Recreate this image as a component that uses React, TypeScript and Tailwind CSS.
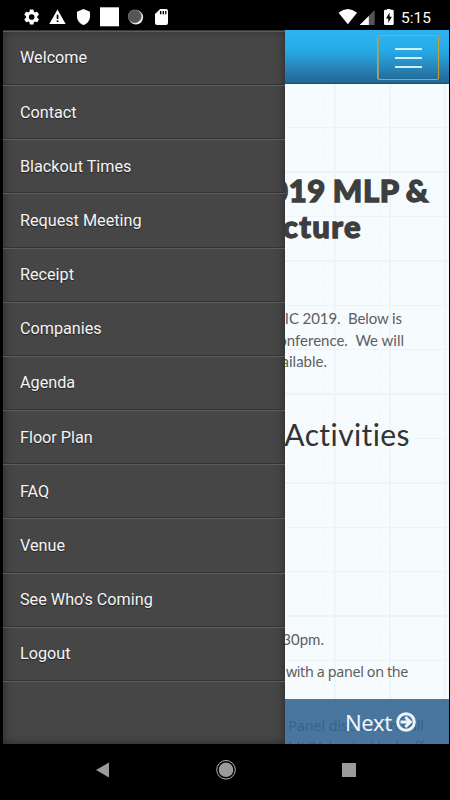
import React from "react";

const items = [
  "Welcome", "Contact", "Blackout Times", "Request Meeting", "Receipt", "Companies",
  "Agenda", "Floor Plan", "FAQ", "Venue", "See Who's Coming", "Logout",
];

function StatusBar() {
  return (
    <div className="relative h-[30px] shrink-0 bg-black">
      <svg className="block" width="450" height="30" viewBox="0 0 450 30" fill="#fff">
        <g transform="translate(22.3 7.6) scale(.78)">
          <path d="M19.14 12.94c.04-.3.06-.61.06-.94 0-.32-.02-.64-.07-.94l2.03-1.58a.49.49 0 0 0 .12-.61l-1.92-3.32a.49.49 0 0 0-.59-.22l-2.39.96c-.5-.38-1.03-.7-1.62-.94l-.36-2.54a.48.48 0 0 0-.48-.41h-3.84c-.24 0-.43.17-.47.41l-.36 2.54c-.59.24-1.13.57-1.62.94l-2.39-.96a.48.48 0 0 0-.59.22L2.74 8.87c-.12.21-.08.47.12.61l2.03 1.58c-.05.3-.09.63-.09.94s.02.64.07.94l-2.03 1.58a.49.49 0 0 0-.12.61l1.92 3.32c.12.22.37.29.59.22l2.39-.96c.5.38 1.03.7 1.62.94l.36 2.54c.05.24.24.41.48.41h3.84c.24 0 .44-.17.47-.41l.36-2.54c.59-.24 1.13-.56 1.62-.94l2.39.96c.22.08.47 0 .59-.22l1.92-3.32a.49.49 0 0 0-.12-.61l-2.01-1.58zM12 15.6A3.6 3.6 0 1 1 12 8.400a3.600 3.600 0 0 1 0 7.200z" />
        </g>
        <path fillRule="evenodd" d="M49.300 24 57.500 9.500 65.700 24zM56.700 14.700v4.300h1.700v-4.300zm0 5.500v1.800h1.700v-1.800z" />
        <path d="M83.500 9l6.500 2.800v4.700c0 3.800-2.700 7.200-6.500 8.500-3.800-1.300-6.500-4.700-6.500-8.500v-4.700z" />
        <path d="M100 7.300h19v19h-19z" />
        <circle cx="135.900" cy="17.300" r="7.200" fill="#eee" />
        <circle cx="134.600" cy="16.200" r="6.800" fill="#555" />
        <circle cx="134.900" cy="16.500" r="6.300" fill="none" stroke="#8a8a8a" strokeWidth="1" strokeDasharray="1 1" />
        <path fillRule="evenodd" d="M160.200 9H166q2 0 2 2v12q0 2-2 2h-9q-2 0-2-2v-9zM160 11v3.300h1.400V11zm2.600 0v3.300h1.400V11zm2.500 0v3.300h1.300V11z" />
        <path d="M338.500 12.700q9.300-7.300 18.600 0L347.800 24.300z" />
        <path d="M374.700 10v15h-15z" fill="#555" />
        <path d="M368.800 15.900V25h-9.100z" />
        <path fillRule="evenodd" d="M387 9.800V9h3.500v.8h2q1.200 0 1.200 1.200v12.700q0 1.200-1.200 1.200h-7.300q-1.200 0-1.200-1.200V11q0-1.200 1.200-1.200zM389.600 12.500l-3.600 6h2.300v4.300l3.600-6h-2.300z" />
      </svg>
      <span className="absolute left-[401px] top-[8px] font-['Roboto',sans-serif] text-[15.500px] leading-[20px] text-white">5:15</span>
    </div>
  );
}

function Drawer() {
  return (
    <nav className="w-[282px] shrink-0 bg-[#464646] pt-px font-['Roboto',sans-serif] text-[16.200px] text-[#f5f5f5] shadow-[inset_0_0_8px_#262626]">
      {items.map((label) => (
        <div key={label} className="flex h-[54.160px] items-center border-t border-b border-t-[#5c5c5c] border-b-[#333] pt-[1px] pl-[17px] [text-shadow:0_1px_1px_#222]">
          {label}
        </div>
      ))}
      <div className="border-t border-[#5c5c5c]" />
    </nav>
  );
}

function Line({ children, className }: { children: React.ReactNode; className: string }) {
  return <div className={"flex justify-end whitespace-pre " + className}>{children}</div>;
}

export default function App() {
  return (
    <div className="flex h-[800px] w-[450px] flex-col overflow-hidden bg-black">
      <StatusBar />
      <div className="flex h-[714px] shrink-0 pl-[3px]">
        <Drawer />
        <main className="relative flex w-[164px] flex-col overflow-hidden bg-[#f6fbfe] font-['Lato',sans-serif] text-[#5e5e5e]">
          <header className="flex h-[54px] shrink-0 justify-end border-b border-[#195078] bg-linear-to-b from-[#2eb2ee] from-10% via-[#26aae5] via-40% to-[#236592] pt-[5px] pr-[10px]">
            <div className="flex h-[45px] w-[62px] flex-col items-center justify-center gap-[7px] rounded-[2px] border border-[#c9a030] shadow-[inset_1px_0_0_#8f9a70]">
              <i className="h-[2px] w-[27px] bg-[#d5edf8]" />
              <i className="h-[2px] w-[27px] bg-[#d5edf8]" />
              <i className="h-[2px] w-[27px] bg-[#d5edf8]" />
            </div>
          </header>
          <div className="h-[660px] shrink-0 bg-[repeating-linear-gradient(90deg,transparent_0_49px,#eef5f8_49px_51px,transparent_51px_55px),repeating-linear-gradient(180deg,transparent_0_43px,#ebf4f7_43px_44.400px),repeating-linear-gradient(90deg,transparent_0_5px,#f3f9fc_5px_6px,transparent_6px_16px,#f3f9fc_16px_17px,transparent_17px_39px,#f2f8fb_39px_40px,transparent_40px_55px),repeating-linear-gradient(180deg,transparent_0_10px,#f3f9fc_10px_11px,transparent_11px_33px,#f2f8fb_33px_34px,transparent_34px_44.400px)]">
            <Line className="pt-[88px] pr-[20px] text-[31px] leading-[36px] font-black tracking-[0.6px] [word-spacing:-1px] text-[#3e3e3e] [-webkit-text-stroke:1.300px_#3e3e3e]">019 MLP &amp;</Line>
            <Line className="pr-[87px] text-[31px] leading-[36px] font-black tracking-[1.400px] text-[#3e3e3e] [-webkit-text-stroke:1.300px_#3e3e3e]">cture</Line>
            <Line className="pt-[63px] pr-[47px] text-[15px] leading-[22px] tracking-[-0.100px]">EIC 2019.  Below is</Line>
            <Line className="pr-[45px] text-[15px] leading-[22px]">onference.  We will</Line>
            <Line className="pr-[122px] text-[15px] leading-[21px]">ailable.</Line>
            <Line className="pt-[44px] pr-[39px] text-[30px] leading-[36px] tracking-[0.400px] text-[#333] [font-variant-ligatures:none]">Activities</Line>
            <Line className="pt-[176px] pr-[125px] text-[15px] leading-[22px]">30pm.</Line>
            <Line className="pt-[11px] pr-[41px] font-['Noto_Sans',sans-serif] text-[14.300px] leading-[22px] tracking-[-0.350px]">with a panel on the</Line>
          </div>
          <footer className="absolute bottom-0 left-0 h-[45px] w-full overflow-hidden bg-[#48769e] text-[#3a638a]">
            <Line className="pt-[16px] pr-[25px] font-['Noto_Sans',sans-serif] text-[14.300px] leading-[22px] tracking-[-0.050px]">Panel discussion will</Line>
            <Line className="pr-[25px] font-['Noto_Sans',sans-serif] text-[14.300px] leading-[19px] tracking-[-0.150px]">MLPA hosted kick off</Line>
            <div className="absolute top-[8px] right-[33px] flex items-center gap-[4px] font-['Noto_Sans',sans-serif] text-[22px] leading-[30px] tracking-[-0.300px] text-[#edf4fa]">
              Next
              <svg width="20" height="20" viewBox="0 0 20 20" fill="none" stroke="#edf4fa">
                <circle cx="10" cy="10" r="8.300" strokeWidth="3" />
                <path d="M4.500 10h10M9.300 5l5 5-5 5" strokeWidth="3" />
              </svg>
            </div>
          </footer>
        </main>
      </div>
      <div className="h-[56px] bg-black">
        <svg className="block" width="450" height="56" viewBox="0 744 450 56" fill="#9b9b9b">
          <path d="M96 770l13-7.500v15z" />
          <circle cx="226" cy="769.800" r="7.300" />
          <circle cx="226" cy="769.800" r="9.300" fill="none" stroke="#b5b5b5" strokeWidth="1" />
          <path d="M342 763h14v14h-14z" />
        </svg>
      </div>
    </div>
  );
}
